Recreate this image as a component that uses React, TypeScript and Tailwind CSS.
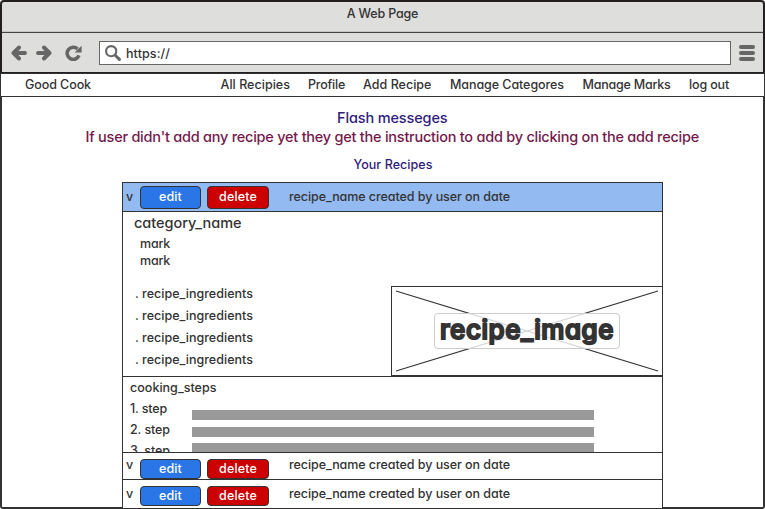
import { useLayoutEffect, useRef, useState } from "react";
import clsx from "clsx";

/* One line of text whose tracking is adjusted so that it fills `width`. */
function Label({ width, className, children }: { width: number; className?: string; children: string }) {
  const ref = useRef<HTMLSpanElement>(null);
  const [spacing, setSpacing] = useState(0);
  useLayoutEffect(() => {
    if (ref.current) {
      const natural = ref.current.getBoundingClientRect().width;
      setSpacing((s) => s + (width - natural) / children.length);
    }
  }, [width, children]);
  return (
    <span className={clsx("block shrink-0 whitespace-pre", className ?? "text-[12.5px] leading-4")} style={{ width }}>
      <span ref={ref} style={{ letterSpacing: `${spacing}px` }}>
        {children}
      </span>
    </span>
  );
}

function BackIcon() {
  return (
    <svg className="h-4 w-4" viewBox="0 0 16 16" fill="none" stroke="#666" strokeWidth="3.9" strokeLinecap="round" strokeLinejoin="round">
      <path d="M3 8H14M8 2.5L2.5 8L8 13.5" />
    </svg>
  );
}

function ForwardIcon() {
  return (
    <svg className="ml-[9px] h-4 w-4" viewBox="0 0 16 16" fill="none" stroke="#666" strokeWidth="3.9" strokeLinecap="round" strokeLinejoin="round">
      <path d="M2 8H13M8 2.5L13.5 8L8 13.5" />
    </svg>
  );
}

function ReloadIcon() {
  return (
    <svg className="ml-[13px] h-4 w-[17px]" viewBox="0 0 17 16">
      <path d="M12.6 4A6.1 6.1 0 1 0 14 10.4" fill="none" stroke="#666" strokeWidth="3.5" />
      <path d="M16.6 0.8V7.4H9.6Z" fill="#666" />
    </svg>
  );
}

function SearchIcon() {
  return (
    <svg className="h-4 w-4" viewBox="0 0 16 16" fill="none" stroke="#666" strokeLinecap="round">
      <circle cx="6.2" cy="6.2" r="5.1" strokeWidth="2.1" />
      <path d="M10.7 10.7L14.4 14.4" strokeWidth="3" />
    </svg>
  );
}

const links = [
  { text: "All Recipies", width: 69.5, gap: "ml-[129.5px]" },
  { text: "Profile", width: 37, gap: "ml-[18px]" },
  { text: "Add Recipe", width: 68.5, gap: "ml-[18px]" },
  { text: "Manage Categores", width: 114, gap: "ml-[18.5px]" },
  { text: "Manage Marks", width: 88, gap: "ml-[18.5px]" },
  { text: "log out", width: 40, gap: "ml-[18.5px]" },
];

function RowContent({ tall, pad, textPad, labelPad }: { tall?: boolean; pad: string; textPad: string; labelPad: string }) {
  const button = clsx("flex justify-center rounded-[4px] border border-[#333] text-white", tall ? "h-[23px]" : "h-5", labelPad);
  return (
    <div className="flex items-start pl-[3px]">
      <div className={textPad}>
        <Label width={7}>v</Label>
      </div>
      <div className={clsx("ml-[7px] flex gap-[6px]", pad)}>
        <div className={clsx(button, "w-[61px] bg-[#2a76e6]")}>
          <Label width={23}>edit</Label>
        </div>
        <div className={clsx(button, "w-[62px] bg-[#cc0000]")}>
          <Label width={38}>delete</Label>
        </div>
      </div>
      <div className={clsx("ml-5", textPad)}>
        <Label width={221}>recipe_name created by user on date</Label>
      </div>
    </div>
  );
}

export default function App() {
  return (
    <div className="flex h-[509px] w-[765px] flex-col overflow-hidden bg-white font-['Inter','Liberation_Sans',sans-serif] font-medium text-[#333] [font-feature-settings:'cv11','calt'_0]">
      <header className="h-[73px] rounded-t-[4px] border-2 border-b border-[#231f20] bg-[#dededc]">
        <div className="flex h-[31px] justify-center border-b border-[#444] pt-1 shadow-[inset_0_-1px_0_#c4c4c2]">
          <Label width={71.5}>A Web Page</Label>
        </div>
        <div className="flex h-[39px] items-center pl-[9px]">
          <BackIcon />
          <ForwardIcon />
          <ReloadIcon />
          <div className="ml-[17px] flex h-6 w-[632px] items-center border border-[#666] bg-white pl-[5px]">
            <SearchIcon />
            <div className="ml-[5px] pt-[2px]">
              <Label width={44}>https://</Label>
            </div>
          </div>
          <div className="ml-2 flex w-4 flex-col gap-[2px]">
            <div className="h-1 rounded-full bg-[#666]" />
            <div className="h-1 rounded-full bg-[#666]" />
            <div className="h-1 rounded-full bg-[#666]" />
          </div>
        </div>
      </header>

      <nav className="flex h-6 border border-[#333] pt-[3px] pl-6">
        <Label width={66}>Good Cook</Label>
        {links.map((l) => (
          <div key={l.text} className={l.gap}>
            <Label width={l.width}>{l.text}</Label>
          </div>
        ))}
      </nav>

      <main className="flex h-[412px] flex-col rounded-b-[3px] border-2 border-t-0 border-[#333]">
        <div className="mt-[11px] ml-[335px] text-[#2f1c7a]">
          <Label width={110.5} className="text-[14.5px] leading-[20px]">Flash messeges</Label>
        </div>
        <div className="-mt-px ml-[83.5px] text-[#74194b]">
          <Label width={613.5} className="text-[14.5px] leading-[20px]">
            If user didn't add any recipe yet they get the instruction to add by clicking on the add recipe
          </Label>
        </div>
        <div className="mt-[10px] ml-[351.5px] text-[#2f1c7a]">
          <Label width={79}>Your Recipes</Label>
        </div>

        <section className="z-10 mt-[9px] -mb-[2px] ml-[120px] flex h-[327px] w-[541px] shrink-0 flex-col border border-[#333] bg-white">
          <div className="h-[29px] shrink-0 border-b border-[#333] bg-[#94baf2]">
            <RowContent tall pad="pt-[3px]" textPad="pt-[6px]" labelPad="pt-[2px]" />
          </div>

          <div className="flex h-[165px] shrink-0 border-b border-[#333]">
            <div className="w-[268px] pl-[11px]">
              <div className="pt-px">
                <Label width={107.5} className="text-[14.5px] leading-[20px]">category_name</Label>
              </div>
              <div className="mt-[3px] flex flex-col gap-px pl-[6px]">
                <Label width={30}>mark</Label>
                <Label width={30}>mark</Label>
              </div>
              <div className="mt-[17px] flex flex-col gap-[6px] pl-px">
                <Label width={118}>. recipe_ingredients</Label>
                <Label width={118}>. recipe_ingredients</Label>
                <Label width={118}>. recipe_ingredients</Label>
                <Label width={118}>. recipe_ingredients</Label>
              </div>
            </div>
            <div className="mt-[74px] grid h-[90px] w-[271px] place-items-center border border-r-0 border-[#333]">
              <svg className="col-start-1 row-start-1 h-[88px] w-[270px]" viewBox="0 0 270 88" stroke="#333" strokeWidth="1.1">
                <path d="M4 4L266 84M266 4L4 84" />
              </svg>
              <div className="z-10 col-start-1 row-start-1 flex h-9 w-[186px] justify-center rounded-[4px] border border-[#ccc] bg-white/80">
                <Label
                  width={174}
                  className="text-[26px] leading-[32px] font-medium [-webkit-text-stroke:2px_#333] [stroke-linejoin:round]"
                >
                  recipe_image
                </Label>
              </div>
            </div>
          </div>

          <div className="flex h-[76px] shrink-0 overflow-hidden border-b border-[#333] pl-[7px]">
            <div className="flex w-[62px] flex-col gap-[5px] pt-[3px]">
              <Label width={86.5}>cooking_steps</Label>
              <Label width={37}>1. step</Label>
              <Label width={40}>2. step</Label>
              <Label width={40}>3. step</Label>
            </div>
            <div className="w-[402px] pt-[33px]">
              <div className="h-[10px] bg-[#999]" />
              <div className="mt-[7px] h-[10px] bg-[#999]" />
              <div className="mt-[6px] h-[10px] bg-[#999]" />
            </div>
          </div>

          <div className="h-[27px] shrink-0 border-b border-[#333]">
            <RowContent pad="pt-[6px]" textPad="pt-[4px]" labelPad="pt-px" />
          </div>
          <div className="h-[28px] shrink-0">
            <RowContent pad="pt-[6px]" textPad="pt-[6px]" labelPad="pt-px" />
          </div>
        </section>
      </main>
    </div>
  );
}
